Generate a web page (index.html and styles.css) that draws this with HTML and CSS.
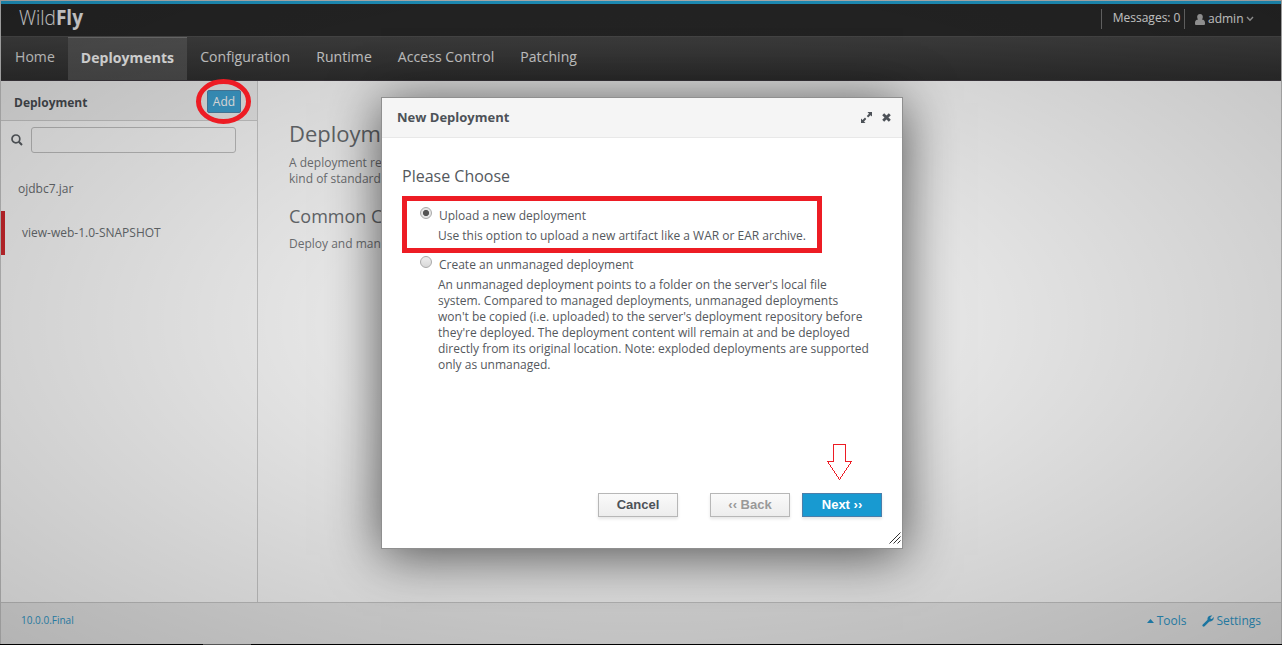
FILE: index.html
```html
<!DOCTYPE html>
<html lang="en">
<head>
<meta charset="utf-8">
<title>WildFly Management</title>
<link rel="stylesheet" href="styles.css">
</head>
<body>
<div class="app">
  <header class="masthead">
    <svg class="logo" width="70" height="32" viewBox="0 0 70 32"><text x="1" y="21" textLength="64" lengthAdjust="spacingAndGlyphs"><tspan class="logo-light">Wild</tspan><tspan class="logo-bold">Fly</tspan></text></svg>
    <div class="utility">
      <span class="messages">Messages: 0</span>
      <span class="user"><svg width="10" height="11" viewBox="0 0 10 11"><path d="M5 0C7 0 8 1.4 7.8 3.2C7.7 4.4 7.3 5.1 6.8 5.6C9 5.8 10 6.8 10 9V10Q10 11 9 11H1Q0 11 0 10V9C0 6.8 1 5.8 3.2 5.6C2.7 5.1 2.3 4.4 2.2 3.2C2 1.4 3 0 5 0Z" fill="#b5b5b5"/></svg><span class="user-name">admin</span><svg width="8" height="6" viewBox="0 0 8 6"><path d="M1 1L4 4.2L7 1" fill="none" stroke="#b5b5b5" stroke-width="1.4"/></svg></span>
    </div>
  </header>
  <nav class="tabs">
    <a class="tab tab-home">Home</a><a class="tab active">Deployments</a><a class="tab">Configuration</a><a class="tab">Runtime</a><a class="tab">Access Control</a><a class="tab">Patching</a>
  </nav>
  <div class="workspace">
    <aside class="column">
      <div class="column-head"><strong>Deployment</strong><button class="add">Add</button></div>
      <div class="search"><svg width="12" height="12" viewBox="0 0 12 12"><circle cx="4.9" cy="4.9" r="3.9" fill="none" stroke="#5c6166" stroke-width="1.7"/><path d="M7.8 7.8L11 11" stroke="#5c6166" stroke-width="2"/></svg><input class="search-box" type="text"></div>
      <div class="item">ojdbc7.jar</div>
      <div class="item failed">view-web-1.0-SNAPSHOT</div>
    </aside>
    <main class="preview">
      <h1>Deploym</h1>
      <p>A deployment re<br>kind of standard</p>
      <h2>Common C</h2>
      <p>Deploy and man</p>
    </main>
  </div>
  <footer class="footer">
    <span class="version">10.0.0.Final</span>
    <span class="tools"><svg width="7" height="4" viewBox="0 0 7 4"><path d="M0 4L3.5 0L7 4Z" fill="#2396cd"/></svg>Tools</span>
    <span class="settings"><svg width="12" height="12" viewBox="0 0 12 12"><path d="M1.7 10.4L7 5.1" stroke="#2396cd" stroke-width="2.6" stroke-linecap="round"/><path d="M10.3.6L8.3 2.4L8.5 3.7L9.9 3.9L11.7 2.1Q12.2 5.6 9.2 6.3Q6.8 6.9 5.7 4.9Q4.9 2.4 7 1Q8.7 0 10.3.6Z" fill="#2396cd"/></svg>Settings</span>
  </footer>
</div>
<div class="bottom-edge"></div>
<div class="glass"></div>
<section class="dialog">
  <header class="dialog-head"><strong>New Deployment</strong>
    <svg class="expand" width="11" height="11" viewBox="0 0 11 11"><path d="M6.5 0H11V4.5L9.5 3.2L7.1 5.4L5.8 4.1L8 1.7ZM4.5 11H0V6.5L1.6 7.9L4 5.6L5.3 6.9L3 9.4Z" fill="#4d5258"/></svg>
    <svg width="9" height="9" viewBox="0 0 9 9"><path d="M1.2 1.2L7.8 7.8M7.8 1.2L1.2 7.8" stroke="#4d5258" stroke-width="2.8"/></svg>
  </header>
  <div class="dialog-body">
    <h3>Please Choose</h3>
    <div class="choice highlighted"><i class="radio checked"></i><span class="choice-title">Upload a new deployment</span><p>Use this option to upload a new artifact like a WAR or EAR archive.</p></div>
    <div class="choice"><i class="radio"></i><span class="choice-title">Create an unmanaged deployment</span><p>An unmanaged deployment points to a folder on the server's local file<br>system. Compared to managed deployments, unmanaged deployments<br>won't be copied (i.e. uploaded) to the server's deployment repository before<br>they're deployed. The deployment content will remain at and be deployed<br>directly from its original location. Note: exploded deployments are supported<br>only as unmanaged.</p></div>
  </div>
  <div class="actions"><button class="btn cancel">Cancel</button><button class="btn back">‹‹ Back</button><button class="btn next">Next ››</button></div>
  <svg class="grip" width="12" height="12" viewBox="0 0 12 12"><path d="M.5 11.5L11.5 .5M4.5 11.5L11.5 4.5M8.5 11.5L11.5 8.5" stroke="#333"/></svg>
</section>
<svg class="ring" width="56" height="46" viewBox="0 0 56 46"><ellipse cx="27.5" cy="22.5" rx="25" ry="20" fill="none" stroke="#ed1c24" stroke-width="5"/></svg>
<svg class="arrow" width="26" height="37" viewBox="0 0 26 37"><path d="M6.5 .5H18.5V17.5H24.5L12.5 35.5L.5 17.5H6.5Z" fill="none" stroke="#ed1c24" shape-rendering="crispEdges"/></svg>
</body>
</html>
```
FILE: styles.css
```css
* { box-sizing: border-box; }
body { margin: 0; width: 1282px; height: 645px; overflow: hidden; position: relative; font: 12px/16px "Open Sans", sans-serif; color: #54585d; background: #fff; }
h1, h2, h3, p { margin: 0; font-weight: 400; }
button { font: inherit; padding: 0; }
.app { height: 644px; border: 1px solid #c9c9c9; border-bottom: 0; display: flex; flex-direction: column; background: #fff; }
.masthead { height: 35px; flex: none; border-top: 3px solid #22a5d6; background: #292929; display: flex; justify-content: space-between; padding-left: 17px; }
.logo-light, .logo-bold { font-family: "Open Sans", sans-serif; font-size: 21px; fill: #f4f4f4; }
.logo-light { font-weight: 300; }
.logo-bold { font-weight: 700; }
.utility { display: flex; padding: 5px 27px 0 0; color: #f1f1f1; }
.messages { height: 20px; border-left: 1px solid #777; padding: 1px 4px 0 11px; }
.user { height: 20px; border-left: 1px solid #777; padding: 0 0 0 10px; display: flex; align-items: center; gap: 2.5px; }
.tabs { height: 45px; flex: none; display: flex; background: linear-gradient(#454545, #303030); border-top: 1px solid #505050; border-bottom: 1px solid #403b42; font-size: 14px; color: #e2e2e2; letter-spacing: .06px; }
.tab { padding: 11px 13px 0; line-height: 18px; }
.tab-home { padding-left: 14px; }
.tab.active { font-weight: 700; color: #fff; background: linear-gradient(#5a5a5a, #505050); border-top: 1px solid #7d7d7d; }
.workspace { flex: 1; display: flex; min-height: 0; }
.column { width: 257px; border-right: 1px solid #d1d1d1; }
.column-head { height: 40px; background: #f3f3f3; border-bottom: 1px solid #d1d1d1; display: flex; align-items: center; justify-content: space-between; padding: 5px 16px 0 13px; color: #4a4e53; }
.add { width: 34px; height: 23px; margin-top: -4px; padding-top: 1px; border: 1px solid #4f88ae; border-radius: 2px; background: #3fa4d5; color: #fff; }
.search { display: flex; align-items: center; padding: 6px 0 0 10px; gap: 8px; }
.search-box { width: 205px; height: 26px; border: 1px solid #c4c4c4; border-radius: 3px; background: transparent; }
.item { height: 44px; padding: 14px 17px; color: #6b6f73; }
.search + .item { margin-top: 14px; }
.item.failed { border-left: 4px solid #d4292f; }
.preview { padding: 37px 0 0 31px; width: 400px; }
.preview h1 { font-size: 22px; line-height: 30px; color: #6b6f73; }
.preview p { color: #77797c; margin-top: 7px; }
.preview h2 { font-size: 18px; line-height: 24px; margin-top: 17px; color: #6b6f73; }
.preview h2 + p { margin-top: 8px; }
.footer { height: 42px; flex: none; background: #ececec; border-top: 1px solid #ccc; display: flex; align-items: center; padding: 0 20px 6px; color: #2f9bcd; }
.version { font-size: 10px; line-height: 14px; margin: -2px auto 0 0; }
.tools, .settings { display: flex; align-items: center; gap: 3px; }
.settings { margin-left: 15px; }
.bottom-edge { height: 1px; background: linear-gradient(90deg, #000 203px, #555 203px, #555 251px, #000 251px); }
.glass { position: absolute; inset: 0 0 1px; background: radial-gradient(ellipse farthest-corner at center, rgba(0,0,0,.07) 0, rgba(0,0,0,.1) 35%, rgba(0,0,0,.24) 100%); }
.dialog { position: absolute; left: 381px; top: 97px; width: 522px; height: 452px; border: 1px solid #8f8f8f; background: #fff; box-shadow: 0 6px 50px rgba(0,0,0,.65); }
.dialog-head { height: 40px; background: #f5f5f5; border-bottom: 1px solid #e8e8e8; display: flex; align-items: center; padding: 0 11px 0 15px; font-size: 13px; color: #4d5258; }
.dialog-head strong { padding-bottom: 2px; }
.expand { margin: 0 10px 1px auto; }
.dialog-body { padding: 26px 20px 0; }
.dialog h3 { font-size: 16px; line-height: 24px; }
.choice { padding: 1px 0 0 18px; white-space: nowrap; }
.choice.highlighted { width: 420px; height: 57px; margin-top: 8px; padding: 6px 0 0 13px; border: 5px solid #ed1c24; }
.choice-title { display: inline-block; vertical-align: top; margin: 0 0 0 7px; line-height: 17px; }
.choice:not(.highlighted) .choice-title { margin-top: 2px; }
.choice p { padding-left: 18px; margin-top: 4px; }
.radio { display: inline-block; vertical-align: top; width: 12px; height: 12px; margin-top: 2px; border: 1px solid #aaa; border-radius: 50%; background: linear-gradient(#eee, #d8d8d8); }
.radio.checked { margin-top: 0; background: radial-gradient(circle, #555 0 2.7px, #e5e5e5 3.5px); }
.actions { position: absolute; right: 20px; bottom: 31px; display: flex; }
.btn { width: 80px; height: 24px; padding-bottom: 2px; font: 700 13px "Liberation Sans", Arial, sans-serif; border: 1px solid #b7b7b7; color: #4d5258; background: linear-gradient(#fafafa, #ededed); box-shadow: 0 2px 3px rgba(0,0,0,.1); }
.back { margin: 0 12px 0 32px; color: #999; }
.next { color: #fff; background: #189ad1; border-color: #4a7eaa; }
.grip { position: absolute; right: 1px; bottom: 4px; }
.ring { position: absolute; left: 196px; top: 79px; }
.arrow { position: absolute; left: 827px; top: 444px; }
```
